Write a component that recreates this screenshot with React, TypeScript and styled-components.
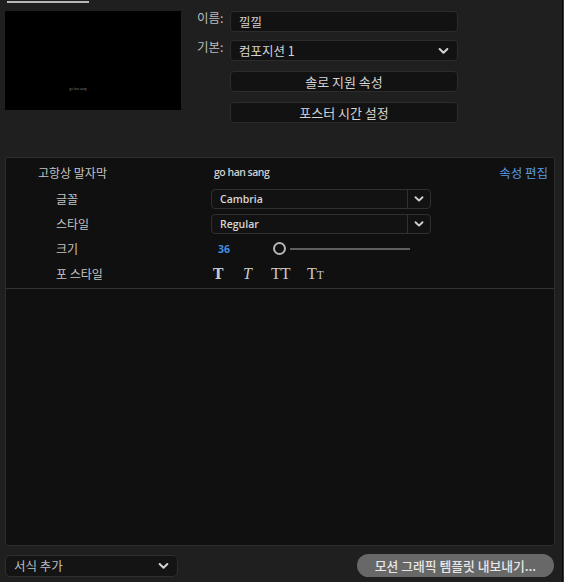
import React from "react";
import styled, { createGlobalStyle } from "styled-components";

const Global = createGlobalStyle`
  html, body { margin: 0; padding: 0; background: #1f1f1f; }
  * { box-sizing: border-box; }
`;

const KR = `"Noto Sans CJK KR", "Noto Sans", sans-serif`;
const LAT = `"Open Sans", "Noto Sans CJK KR", sans-serif`;

const Root = styled.div`
  position: relative;
  width: 564px;
  height: 582px;
  background: #1f1f1f;
  border-right: 1px solid #2a3a55;
  box-shadow: inset -1px 0 0 #0b0b0b;
  font-family: ${KR};
  color: #c9c9c9;
  display: flex;
  flex-direction: column;
  overflow: hidden;
`;

const TabLine = styled.div`
  margin: 1px 0 0 7px;
  width: 82px;
  height: 2px;
  background: #b8b8b8;
`;

const Top = styled.div`
  display: flex;
  padding: 8px 0 0 5px;
  gap: 16px;
`;

const Preview = styled.div`
  width: 176px;
  height: 99px;
  background: #000;
  display: flex;
  align-items: center;
  justify-content: center;
  padding-top: 56px;
  padding-right: 30px;
`;

const TinyText = styled.span`
  font-family: ${LAT};
  font-size: 3px;
  color: #8a8a8a;
`;

const Form = styled.div`
  display: grid;
  grid-template-columns: 27px 228px;
  column-gap: 6px;
  row-gap: 8px;
  grid-auto-rows: 21px;
`;

const FormLabel = styled.div`
  font-size: 12.5px;
  line-height: 14px;
  color: #bdbdbd;
`;

const Field = styled.div<{ $center?: boolean; $mt?: number }>`
  position: relative;
  height: 21px;
  background: #121212;
  border: 1px solid #2c2c2c;
  border-radius: 4px;
  display: flex;
  align-items: center;
  justify-content: ${(p) => (p.$center ? "center" : "flex-start")};
  padding: 0 8px;
  font-size: ${(p) => (p.$center ? "13px" : "12.5px")};
  color: #d4d4d4;
  margin-top: ${(p) => p.$mt ?? 0}px;
`;

const Chevron = ({ size = 10, color = "#d0d0d0" }: { size?: number; color?: string }) => (
  <svg width={size} height={size} viewBox="0 0 10 10">
    <path d="M1.5 3.2 L5 6.6 L8.5 3.2" fill="none" stroke={color} strokeWidth="1.9" strokeLinecap="round" strokeLinejoin="round" />
  </svg>
);

const ChevronBox = styled.span`
  position: absolute;
  right: 8px;
  top: 50%;
  transform: translateY(-50%);
  display: flex;
`;

const Panel = styled.div`
  margin: 38px 8px 0 5px;
  height: 389px;
  background: #101010;
  border: 1px solid #2d2d2d;
  border-radius: 3px;
  display: flex;
  flex-direction: column;
`;

const Props = styled.div`
  display: flex;
  flex-direction: column;
  padding: 0 0 2px 0;
  border-bottom: 1px solid #333;
`;

const Row = styled.div<{ $h: number; $indent: number }>`
  display: grid;
  grid-template-columns: ${(p) => 205 - p.$indent}px 1fr auto;
  align-items: center;
  height: ${(p) => p.$h}px;
  padding-left: ${(p) => p.$indent}px;
`;

const RowLabel = styled.div`
  font-size: 12px;
  color: #c4c4c4;
`;

const HeadValue = styled.div`
  font-family: ${LAT};
  font-size: 10.5px;
  font-weight: 600;
  letter-spacing: -0.5px;
  color: #cfcfcf;
  padding-left: 3px;
`;

const EditLink = styled.div`
  font-size: 12.5px;
  color: #5b9be0;
  padding-right: 6px;
`;

const Select = styled.div`
  width: 220px;
  height: 20px;
  border: 1px solid #303030;
  border-radius: 4px;
  background: #121212;
  display: flex;
  align-items: stretch;
`;

const SelectText = styled.div`
  flex: 1;
  font-family: ${LAT};
  font-size: 10.5px;
  font-weight: 600;
  color: #d6d6d6;
  display: flex;
  align-items: center;
  padding-left: 8px;
  border-right: 1px solid #303030;
`;

const SelectBtn = styled.div`
  width: 22px;
  display: flex;
  align-items: center;
  justify-content: center;
`;

const SliderWrap = styled.div`
  display: flex;
  align-items: center;
`;

const SizeValue = styled.div`
  width: 62px;
  padding-left: 7px;
  font-family: ${LAT};
  font-weight: 700;
  font-size: 10.5px;
  color: #3f8ee0;
`;

const Knob = styled.div`
  width: 13px;
  height: 13px;
  border: 2px solid #b5b5b5;
  border-radius: 50%;
  background: #101010;
`;

const Track = styled.div`
  width: 120px;
  height: 2px;
  margin-left: 4px;
  background: #5f5f5f;
`;

const Styles = styled.div`
  display: flex;
  align-items: center;
  padding-left: 2px;
  color: #c9c9c9;
`;

const StyleBtn = styled.span<{ $w: number; $bold?: boolean; $italic?: boolean }>`
  width: ${(p) => p.$w}px;
  font-weight: ${(p) => (p.$bold ? 700 : 400)};
  font-style: ${(p) => (p.$italic ? "italic" : "normal")};
  font-family: ${(p) => (p.$bold ? `"DejaVu Serif", serif` : `"Liberation Serif", serif`)};
  font-size: ${(p) => (p.$bold ? "14px" : "16px")};
`;

const Small = styled.span`
  font-size: 11.5px;
`;

const Bottom = styled.div`
  display: flex;
  justify-content: space-between;
  align-items: center;
  padding: 8px 9px 0 5px;
`;

const BottomSelect = styled.div`
  position: relative;
  width: 173px;
  height: 22px;
  background: #141414;
  border: 1px solid #2e2e2e;
  border-radius: 5px;
  font-size: 12.5px;
  color: #bdbdbd;
  display: flex;
  align-items: center;
  padding-left: 8px;
`;

const ExportBtn = styled.div`
  width: 197px;
  height: 23px;
  border-radius: 12px;
  background: #686868;
  color: #e6e6e6;
  font-size: 12.8px;
  font-weight: 500;
  display: flex;
  align-items: center;
  justify-content: center;
`;

export default function App() {
  return (
    <Root>
      <Global />
      <TabLine />
      <Top>
        <Preview>
          <TinyText>go han sang</TinyText>
        </Preview>
        <Form>
          <FormLabel>이름:</FormLabel>
          <Field>낄낄</Field>
          <FormLabel>기본:</FormLabel>
          <Field>
            컴포지션 1
            <ChevronBox>
              <Chevron size={11} />
            </ChevronBox>
          </Field>
          <span />
          <Field $center $mt={2}>솔로 지원 속성</Field>
          <span />
          <Field $center $mt={4}>포스터 시간 설정</Field>
        </Form>
      </Top>
      <Panel>
        <Props>
          <Row $h={28} $indent={32}>
            <RowLabel>고항상 말자막</RowLabel>
            <HeadValue>go han sang</HeadValue>
            <EditLink>속성 편집</EditLink>
          </Row>
          <Row $h={25} $indent={50}>
            <RowLabel>글꼴</RowLabel>
            <Select>
              <SelectText>Cambria</SelectText>
              <SelectBtn>
                <Chevron />
              </SelectBtn>
            </Select>
          </Row>
          <Row $h={25} $indent={50}>
            <RowLabel>스타일</RowLabel>
            <Select>
              <SelectText>Regular</SelectText>
              <SelectBtn>
                <Chevron />
              </SelectBtn>
            </Select>
          </Row>
          <Row $h={25} $indent={50}>
            <RowLabel>크기</RowLabel>
            <SliderWrap>
              <SizeValue>36</SizeValue>
              <Knob />
              <Track />
            </SliderWrap>
          </Row>
          <Row $h={25} $indent={50}>
            <RowLabel>포 스타일</RowLabel>
            <Styles>
              <StyleBtn $w={30} $bold>T</StyleBtn>
              <StyleBtn $w={28} $italic>T</StyleBtn>
              <StyleBtn $w={36}>TT</StyleBtn>
              <StyleBtn $w={30}>
                T<Small>T</Small>
              </StyleBtn>
            </Styles>
          </Row>
        </Props>
      </Panel>
      <Bottom>
        <BottomSelect>
          서식 추가
          <ChevronBox>
            <Chevron size={11} />
          </ChevronBox>
        </BottomSelect>
        <ExportBtn>모션 그래픽 템플릿 내보내기...</ExportBtn>
      </Bottom>
    </Root>
  );
}
